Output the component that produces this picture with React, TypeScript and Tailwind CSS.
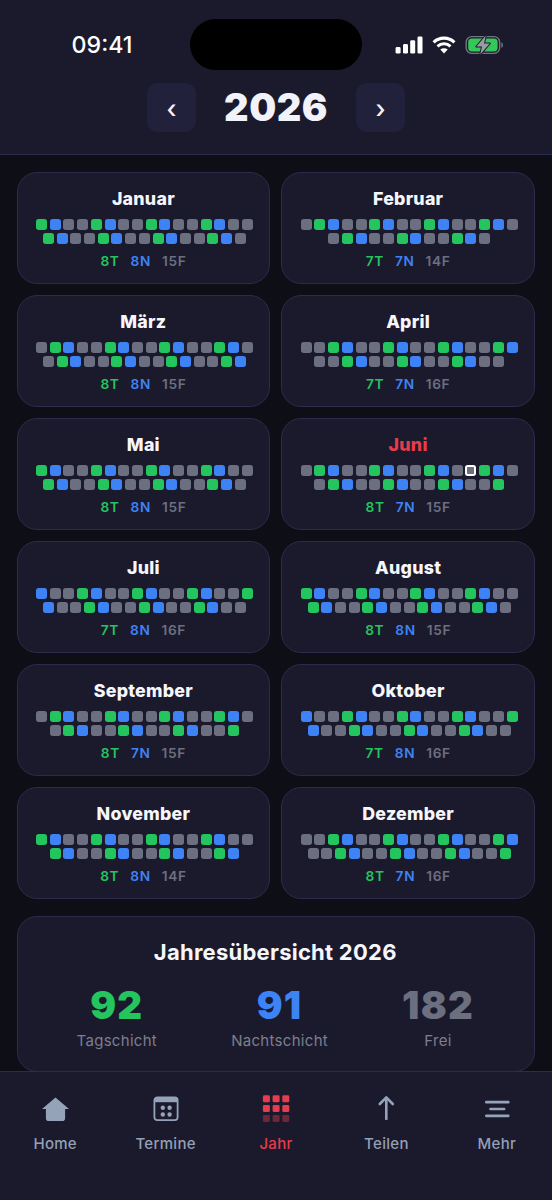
import type { ReactNode } from "react";
import { clsx } from "clsx";

type Shift = "T" | "N" | "F";

const YEAR = 2026;
const TODAY = { month: 5, day: 13 };
const CYCLE: Shift[] = ["T", "N", "F", "F"];

const MONTH_NAMES = [
  "Januar",
  "Februar",
  "März",
  "April",
  "Mai",
  "Juni",
  "Juli",
  "August",
  "September",
  "Oktober",
  "November",
  "Dezember",
];

const SHIFT_BG: Record<Shift, string> = {
  T: "bg-[#24c45f]",
  N: "bg-[#3e83f5]",
  F: "bg-[#6c6f80]",
};

const SHIFT_TEXT: Record<Shift, string> = {
  T: "text-[#24c45f]",
  N: "text-[#3e83f5]",
  F: "text-[#6c6f80]",
};

let dayOfYear = 0;
const MONTHS = MONTH_NAMES.map((name, index) => {
  const length = new Date(YEAR, index + 1, 0).getDate();
  const days = Array.from({ length }, () => CYCLE[dayOfYear++ % CYCLE.length]);
  return { name, days };
});

const count = (days: Shift[], shift: Shift) => days.filter((d) => d === shift).length;

const ALL_DAYS = MONTHS.flatMap((m) => m.days);

const SUMMARY: { shift: Shift; label: string }[] = [
  { shift: "T", label: "Tagschicht" },
  { shift: "N", label: "Nachtschicht" },
  { shift: "F", label: "Frei" },
];

function StatusBar() {
  return (
    <div className="flex h-[83px] items-start justify-between pt-[19px]">
      <div className="flex h-[52px] w-[190px] items-center justify-center pl-[14px] text-[23.2px] font-medium text-white">
        09:41
      </div>
      <div className="h-[51px] w-[172px] rounded-full bg-black" />
      <div className="flex h-[52px] w-[190px] items-center pl-[33px]">
        <svg width="28" height="18" viewBox="0 0 28 18" fill="#fff">
          <rect x="0.6" y="11" width="5" height="6.6" rx="1.4" />
          <rect x="8" y="8" width="5" height="9.6" rx="1.4" />
          <rect x="15.2" y="4.2" width="5" height="13.4" rx="1.4" />
          <rect x="22.5" y="0.4" width="5" height="17.2" rx="1.4" />
        </svg>
        <svg className="ml-[9px]" width="24" height="18" viewBox="0 0 24 18" fill="none" stroke="#fff">
          <path d="M1.6 6.3a15 15 0 0 1 20.8 0" strokeWidth="3.2" />
          <path d="M5.5 10.4a9.4 9.4 0 0 1 13 0" strokeWidth="3" />
          <path d="M12 17.4l-3.7-3.8a5.4 5.4 0 0 1 7.4 0z" fill="#fff" stroke="none" />
        </svg>
        <svg className="ml-[9px]" width="39" height="20" viewBox="0 0 39 20">
          <rect x="1.2" y="1.6" width="33.4" height="16.8" rx="5.4" fill="none" stroke="#75757f" strokeWidth="1.4" />
          <path d="M36.3 7.2c2.2.8 2.2 4.8 0 5.6z" fill="#75757f" />
          <rect x="3.2" y="3.6" width="29.4" height="12.8" rx="3.6" fill="#35c759" />
          <path
            d="M20.8.6 11.4 11.6h5.6L15.2 19.6 24.8 8.4h-5.8z"
            fill="#9a9aa2"
            stroke="#1b1a2c"
            strokeWidth="2"
            strokeLinejoin="round"
            paintOrder="stroke"
          />
        </svg>
      </div>
    </div>
  );
}

function YearButton({ children }: { children: ReactNode }) {
  return (
    <button
      type="button"
      className="flex size-[49px] items-center justify-center rounded-[11px] bg-[#22213c] pt-1 text-[25px] font-medium text-[#f1f2fa]"
    >
      {children}
    </button>
  );
}

function MonthCard({ month, index }: { month: (typeof MONTHS)[number]; index: number }) {
  const isCurrent = index === TODAY.month;

  return (
    <section className="flex h-28 flex-col items-center rounded-[20px] border border-[#2d2b4b] bg-[#1b1a2c] pt-[13.5px]">
      <h2
        className={clsx(
          "text-[17.8px] leading-6 font-extrabold tracking-[0.25px]",
          isCurrent ? "text-[#e63c4b]" : "text-[#f6f6fd]"
        )}
      >
        {month.name}
      </h2>
      <div className="mt-[8.5px] flex w-[220px] flex-wrap justify-center gap-[2.72px] pl-[2px]">
        {month.days.map((shift, i) => (
          <div
            key={i}
            className={clsx(
              "size-[11px] rounded-[2.75px]",
              SHIFT_BG[shift],
              isCurrent && i + 1 === TODAY.day && "border-2 border-white"
            )}
          />
        ))}
      </div>
      <div className="mt-[7px] flex gap-[11px] text-[13.7px] leading-5 font-semibold tracking-[0.65px]">
        {SUMMARY.map(({ shift }) => (
          <span key={shift} className={SHIFT_TEXT[shift]}>
            {count(month.days, shift)}
            {shift}
          </span>
        ))}
      </div>
    </section>
  );
}

function HomeIcon() {
  return (
    <svg width="28" height="28" viewBox="0 0 28 28" fill="#94a3b8">
      <path d="M14.5 2.6 28 13.9H24.1V23.2a2.8 2.8 0 0 1-2.8 2.8H7.7a2.8 2.8 0 0 1-2.8-2.8V13.9H1z" />
    </svg>
  );
}

function CalendarIcon() {
  return (
    <svg width="28" height="28" viewBox="0 0 28 28" fill="#94a3b8">
      <rect x="2.4" y="2.5" width="23.2" height="22.6" rx="2.8" fill="none" stroke="#94a3b8" strokeWidth="1.8" />
      <path d="M2 3h24v4.2H2z" />
      <circle cx="10.8" cy="12.7" r="2.2" />
      <circle cx="17.6" cy="12.7" r="2.2" />
      <circle cx="10.8" cy="19.5" r="2.2" />
      <circle cx="17.6" cy="19.5" r="2.2" />
    </svg>
  );
}

function YearIcon() {
  return (
    <svg width="28" height="28" viewBox="0 0 28 28" fill="#e63c4b">
      {[0.3, 10.1, 19.9].map((y, row) =>
        [0.9, 10.6, 20.3].map((x) => (
          <rect key={`${x}-${y}`} x={x} y={y} width="7" height="7" rx="1.4" opacity={row === 2 ? 0.4 : 1} />
        ))
      )}
    </svg>
  );
}

function ShareIcon() {
  return (
    <svg width="28" height="28" viewBox="0 0 28 28" fill="none" stroke="#94a3b8" strokeWidth="2.6">
      <path d="M14.3 24.9V3" strokeLinecap="butt" />
      <path d="M7.8 9 14.3 2.4 20.8 9" strokeLinecap="round" strokeLinejoin="round" />
    </svg>
  );
}

function MoreIcon() {
  return (
    <svg width="28" height="28" viewBox="0 0 28 28" stroke="#94a3b8" strokeWidth="2.7" strokeLinecap="round">
      <path d="M3.3 7.2h22M7.5 14h13.6M3.3 20.8h22" />
    </svg>
  );
}

const TABS = [
  { label: "Home", icon: <HomeIcon /> },
  { label: "Termine", icon: <CalendarIcon /> },
  { label: "Jahr", icon: <YearIcon />, active: true },
  { label: "Teilen", icon: <ShareIcon /> },
  { label: "Mehr", icon: <MoreIcon /> },
];

export default function App() {
  return (
    <div className="flex h-[1200px] w-[552px] flex-col overflow-hidden bg-[#0e0e17] font-['Inter','Liberation_Sans',sans-serif]">
      <header className="h-[155px] shrink-0 border-b border-[#2d2b4b] bg-[#1b1a2c]">
        <StatusBar />
        <div className="flex items-center justify-center gap-[26px]">
          <YearButton>‹</YearButton>
          <h1 className="w-[108px] text-center text-[38px] leading-[49px] font-black tracking-[0.5px] text-[#f1f2fa]">
            {YEAR}
          </h1>
          <YearButton>›</YearButton>
        </div>
      </header>

      <main className="min-h-0 flex-1 overflow-hidden pt-[17px] pr-[17px] pl-[16.5px]">
        <div className="grid grid-cols-2 gap-[11px]">
          {MONTHS.map((month, i) => (
            <MonthCard key={month.name} month={month} index={i} />
          ))}
        </div>

        <section className="mt-[17px] h-[156px] rounded-[20px] border border-[#2d2b4b] bg-[#1b1a2c] pt-5 pr-[23px] pl-[22px] text-center">
          <h2 className="text-[22px] leading-[30px] font-bold tracking-[0.25px] text-[#f6f6fd]">
            Jahresübersicht {YEAR}
          </h2>
          <div className="mt-[15px] flex justify-around">
            {SUMMARY.map(({ shift, label }) => (
              <div key={shift}>
                <div className={clsx("text-[38.4px] leading-[46px] font-black tracking-[1.2px]", SHIFT_TEXT[shift])}>
                  {count(ALL_DAYS, shift)}
                </div>
                <div className="mt-[3px] text-[15px] leading-5 tracking-[0.3px] text-[#7d7e8e]">{label}</div>
              </div>
            ))}
          </div>
        </section>
      </main>

      <nav className="flex h-[129px] shrink-0 border-t border-[#2d2b4b] bg-[#1b1a2c] pt-[23px]">
        {TABS.map((tab) => (
          <button key={tab.label} type="button" className="flex flex-1 flex-col items-center">
            {tab.icon}
            <span
              className={clsx(
                "mt-[11px] text-[15px] leading-5 font-medium tracking-[0.3px]",
                tab.active ? "text-[#e63c4b]" : "text-[#94a0b5]"
              )}
            >
              {tab.label}
            </span>
          </button>
        ))}
      </nav>
    </div>
  );
}
